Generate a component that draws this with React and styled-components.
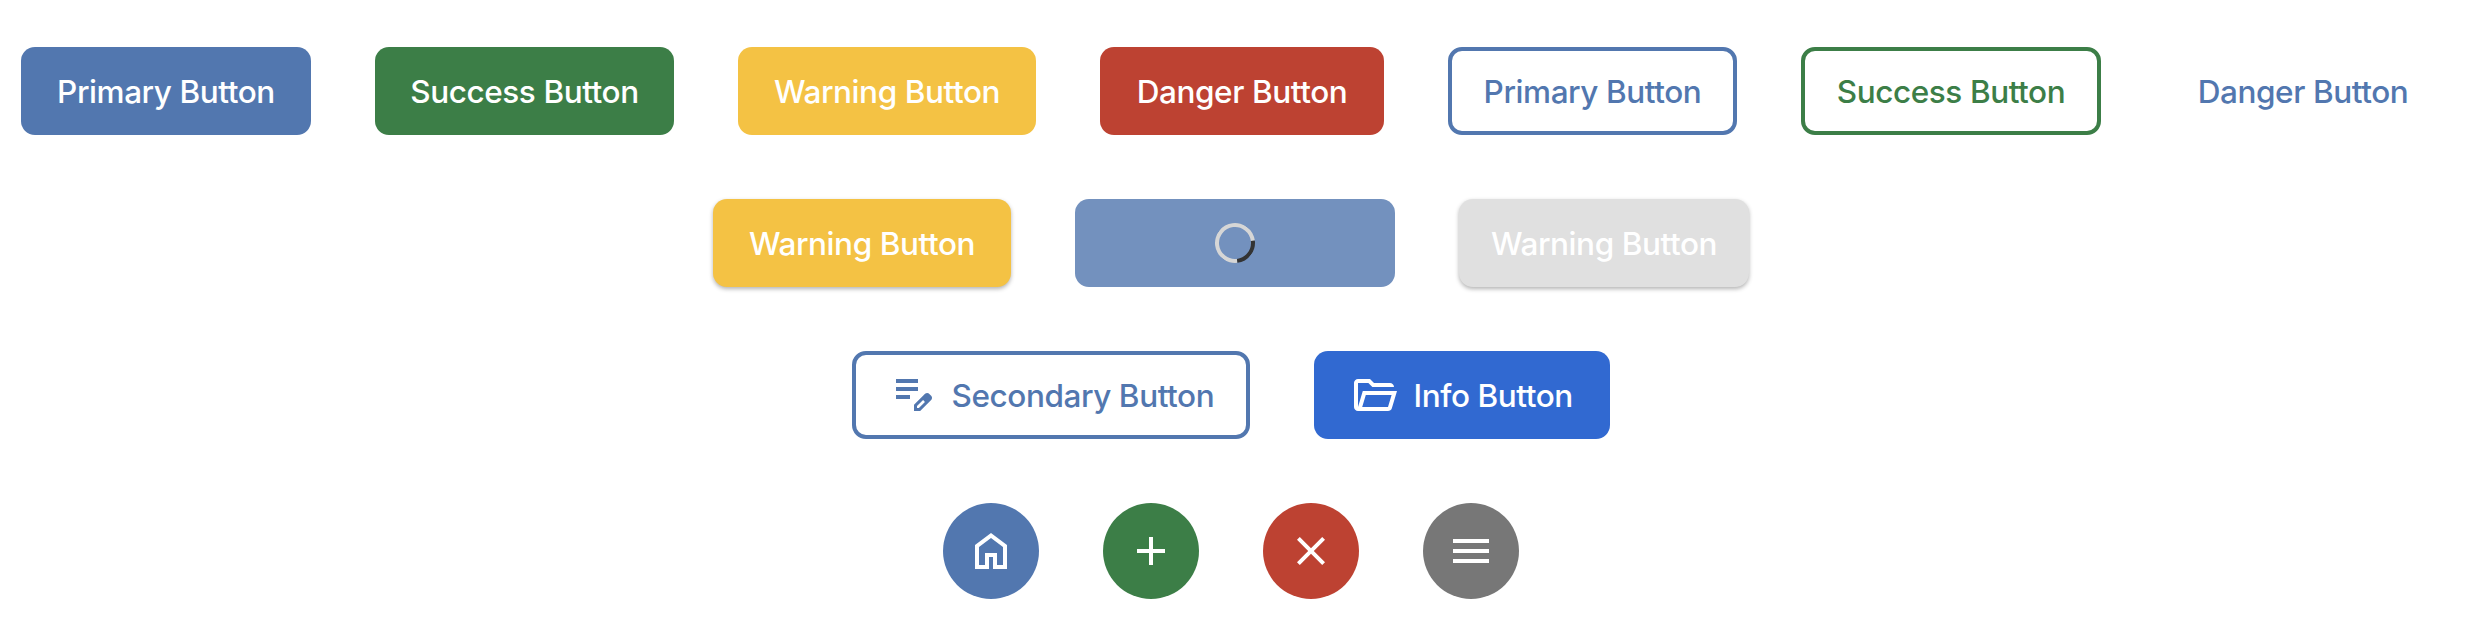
import React from 'react';
import styled, { createGlobalStyle } from 'styled-components';

const Global = createGlobalStyle`
  body { margin: 0; background: #fff; }
  *, *::before, *::after { box-sizing: border-box; }
`;

const Page = styled.main`
  width: 2462px;
  padding: 47px 0 43px;
  display: flex;
  flex-direction: column;
  gap: 64px;
`;

const Row = styled.div`
  display: flex;
  justify-content: center;
  gap: 64px;
`;

const Button = styled.button`
  display: flex;
  align-items: center;
  justify-content: center;
  flex: none;
  width: ${p => p.$width}px;
  height: 88px;
  padding: 0;
  border: ${p => (p.$outlined ? `4px solid ${p.$color}` : 'none')};
  border-radius: 14px;
  background: ${p => (p.$outlined || p.$text ? 'transparent' : p.$color)};
  color: ${p => (p.$outlined || p.$text ? p.$color : '#fff')};
  box-shadow: ${p => (p.$raised ? '0 2px 4px rgba(0, 0, 0, 0.3)' : 'none')};
  font: 500 31.5px/40px Inter, "Liberation Sans", sans-serif;
`;

const IconTextButton = styled(Button)`
  justify-content: flex-start;
  padding-left: ${p => (p.$outlined ? 32 : 36)}px;
`;

const Label = styled.span`
  padding-top: 2px;
  white-space: nowrap;
  letter-spacing: -0.42px;
`;

const ButtonIcon = styled.svg`
  width: 48px;
  height: 48px;
  margin-right: 15.5px;
  fill: currentColor;
`;

const Spinner = styled.span`
  width: 40px;
  height: 40px;
  border: 4px solid #d6d6d6;
  border-right-color: #333;
  border-radius: 50%;
  transform: rotate(38deg);
`;

const RoundButton = styled.button`
  display: grid;
  place-items: center;
  width: 96px;
  height: 96px;
  padding: 0;
  border: 0;
  border-radius: 50%;
  background: ${p => p.$color};
  color: #fff;

  svg {
    width: 48px;
    height: 48px;
    fill: currentColor;
  }
`;

const colors = {
  primary: '#5277af',
  success: '#3c7e47',
  warning: '#f4c244',
  danger: '#bd4232',
  info: '#3169d1',
  loading: '#7391be',
  disabled: '#e0e0e0',
  neutral: '#777777',
};

export default function App() {
  return (
    <>
      <Global />
      <Page>
        <Row>
          <Button $width={290} $color={colors.primary}><Label>Primary Button</Label></Button>
          <Button $width={299} $color={colors.success}><Label>Success Button</Label></Button>
          <Button $width={298} $color={colors.warning}><Label>Warning Button</Label></Button>
          <Button $width={284} $color={colors.danger}><Label>Danger Button</Label></Button>
          <Button $width={289} $color={colors.primary} $outlined><Label>Primary Button</Label></Button>
          <Button $width={300} $color={colors.success} $outlined><Label>Success Button</Label></Button>
          <Button $width={276} $color={colors.primary} $text><Label>Danger Button</Label></Button>
        </Row>
        <Row>
          <Button $width={298} $color={colors.warning} $raised><Label>Warning Button</Label></Button>
          <Button $width={320} $color={colors.loading} aria-label="Loading"><Spinner /></Button>
          <Button $width={290} $color={colors.disabled} $raised><Label>Warning Button</Label></Button>
        </Row>
        <Row>
          <IconTextButton $width={398} $color={colors.primary} $outlined>
            <ButtonIcon viewBox="0 0 24 24">
              <path d="M4 14v-2h7v2H4Zm0-4V8h11v2H4Zm0-4V4h11v2H4Zm9 14v-3.075l5.525-5.5q.225-.225.5-.325t.55-.1q.3 0 .575.113t.5.337l.925.925q.2.225.313.5t.112.55-.1.563-.325.512l-5.5 5.5H13Zm1.500-1.500h.950l3.025-3.050-.450-.475-.475-.450-3.050 3.025v.950Z" />
            </ButtonIcon>
            <Label>Secondary Button</Label>
          </IconTextButton>
          <IconTextButton $width={296} $color={colors.info}>
            <ButtonIcon viewBox="0 0 24 24">
              <path d="M4 20q-.825 0-1.412-.587T2 18V6q0-.825.588-1.412T4 4h6l2 2h8q.825 0 1.413.588T22 8H11.175l-2-2H4v12l2.400-8h17.100l-2.575 8.575q-.2.650-.738 1.038T19 20H4Zm2.100-2H19l1.800-6H7.900l-1.800 6Z" />
            </ButtonIcon>
            <Label>Info Button</Label>
          </IconTextButton>
        </Row>
        <Row>
          <RoundButton $color={colors.primary} aria-label="Home">
            <svg viewBox="0 0 24 24"><path d="M6 19h3v-6h6v6h3v-9l-6-4.500L6 10v9Zm-2 2V9l8-6 8 6v12h-7v-6h-2v6H4Z" /></svg>
          </RoundButton>
          <RoundButton $color={colors.success} aria-label="Add">
            <svg viewBox="0 0 24 24"><path d="M11 13H5v-2h6V5h2v6h6v2h-6v6h-2v-6Z" /></svg>
          </RoundButton>
          <RoundButton $color={colors.danger} aria-label="Close">
            <svg viewBox="0 0 24 24"><path d="m6.400 19-1.400-1.400 5.600-5.600L5 6.400 6.400 5l5.600 5.600L17.600 5 19 6.400 13.400 12l5.600 5.600-1.400 1.400-5.600-5.600L6.400 19Z" /></svg>
          </RoundButton>
          <RoundButton $color={colors.neutral} aria-label="Menu">
            <svg viewBox="0 0 24 24"><path d="M3 18v-2h18v2H3Zm0-5v-2h18v2H3Zm0-5V6h18v2H3Z" /></svg>
          </RoundButton>
        </Row>
      </Page>
    </>
  );
}
